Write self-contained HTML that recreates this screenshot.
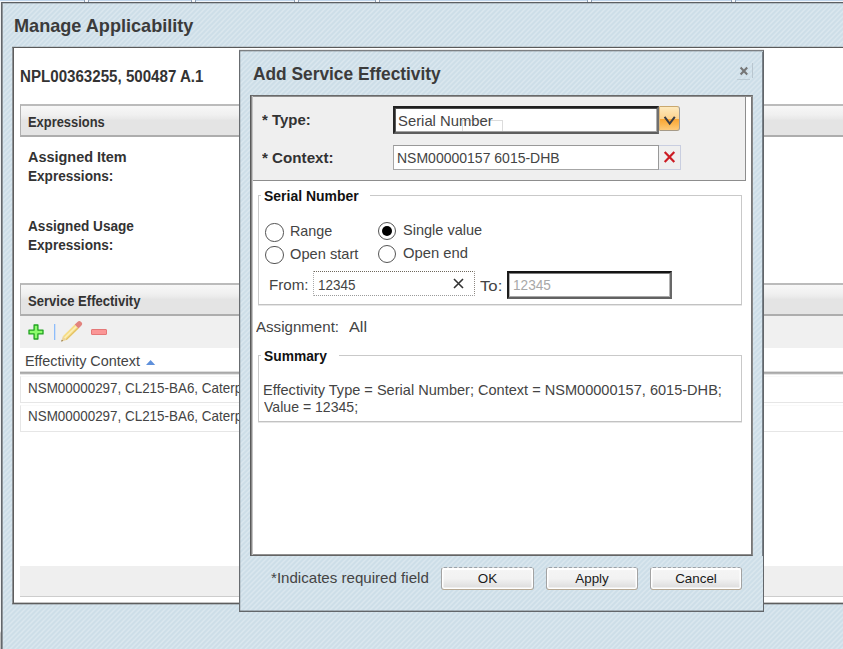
<!DOCTYPE html>
<html><head><meta charset="utf-8">
<style>
*{box-sizing:border-box;margin:0;padding:0}
html,body{width:843px;height:649px;overflow:hidden}
body{font-family:"Liberation Sans",sans-serif;color:#3a3a3a;position:relative;
 background:#cddee8 repeating-linear-gradient(135deg,rgba(255,255,255,0) 0,rgba(255,255,255,0) 1px,rgba(255,255,255,.26) 2px,rgba(255,255,255,.26) 2.5px,rgba(255,255,255,0) 3.54px);}
.abs{position:absolute}
.t{position:absolute;white-space:nowrap;transform-origin:0 50%;line-height:1}
.stripe{background:#cddee8 repeating-linear-gradient(135deg,rgba(255,255,255,0) 0,rgba(255,255,255,0) 1px,rgba(255,255,255,.26) 2px,rgba(255,255,255,.26) 2.5px,rgba(255,255,255,0) 3.54px)}
b,.b{font-weight:bold}
</style></head><body>
<!-- top app strip -->
<div class="abs" style="left:0;top:0;width:843px;height:1px;background:#c0d5eb"></div><div class="abs" style="left:0;top:1px;width:843px;height:1px;background:#f3f6fa"></div>
<div class="abs" style="left:84px;top:0;width:5px;height:2px;background:#f6f8fb;border-left:1px solid #8d9db3;border-right:1px solid #8d9db3"></div><div class="abs" style="left:191px;top:0;width:5px;height:2px;background:#f6f8fb;border-left:1px solid #8d9db3;border-right:1px solid #8d9db3"></div><div class="abs" style="left:294px;top:0;width:5px;height:2px;background:#f6f8fb;border-left:1px solid #8d9db3;border-right:1px solid #8d9db3"></div><div class="abs" style="left:375px;top:0;width:5px;height:2px;background:#f6f8fb;border-left:1px solid #8d9db3;border-right:1px solid #8d9db3"></div><div class="abs" style="left:587px;top:0;width:5px;height:2px;background:#f6f8fb;border-left:1px solid #8d9db3;border-right:1px solid #8d9db3"></div><div class="abs" style="left:731px;top:0;width:5px;height:2px;background:#f6f8fb;border-left:1px solid #8d9db3;border-right:1px solid #8d9db3"></div>
<!-- main window border -->
<div class="abs" style="left:1px;top:2px;width:842px;height:1px;background:#5c5f62"></div><div class="abs" style="left:3px;top:3px;width:840px;height:1px;background:rgba(90,95,100,.28)"></div>
<div class="abs" style="left:1px;top:2px;width:1px;height:647px;background:#63676b"></div><div class="abs" style="left:2px;top:3px;width:1px;height:646px;background:#8f959a"></div>
<div class="abs" style="left:0;top:2px;width:1px;height:647px;background:linear-gradient(#f0f1f2 0,#f0f1f2 629px,#bdbdbd 631px,#bdbdbd)"></div>

<div class="t" id="t_title" style="left:14.00px;top:17.00px;font-size:18.5px;color:#3b3b3b;font-weight:bold;transform:scaleX(0.9787)">Manage Applicability</div>

<!-- white main panel -->
<div class="abs" style="left:12px;top:47px;width:840px;height:557px;background:#fff;border-left:1px solid #8e9296;border-top:1px solid #5a5a5a;border-bottom:1px solid #5e5e5e;box-shadow:0 -1px 0 rgba(90,90,90,.18),0 1px 0 rgba(90,90,90,.3)"></div><div class="abs" style="left:13px;top:47px;width:1px;height:557px;background:#5e5e5e"></div><div class="abs" style="left:14px;top:602px;width:830px;height:1px;background:#c4c4c4"></div>

<div class="t" id="t_npl" style="left:20.00px;top:69.00px;font-size:16px;color:#333;font-weight:bold;transform:scaleX(0.9447)">NPL00363255, 500487 A.1</div>

<!-- Expressions header -->
<div class="abs hdr" style="left:20px;top:104px;width:830px;height:33px;border-left:1px solid #b0b0b0;border-top:2px solid #bbb;border-bottom:2px solid #adadad;background:linear-gradient(#f7f7f7,#f0f0f0 30%,#eaeaea 42%,#e4e4e4 50%,#e4e4e4)"></div>
<div class="t" id="t_expr" style="left:28.00px;top:115.00px;font-size:14px;color:#333;font-weight:bold;transform:scaleX(0.9210)">Expressions</div>

<div class="t" id="t_ai1" style="left:28.00px;top:150.00px;font-size:14.5px;color:#333;font-weight:bold;transform:scaleX(0.9960)">Assigned Item</div>
<div class="t" id="t_ai2" style="left:28.00px;top:169.00px;font-size:14.5px;color:#333;font-weight:bold;transform:scaleX(0.9370)">Expressions:</div>
<div class="t" id="t_au1" style="left:28.00px;top:219.00px;font-size:14.5px;color:#333;font-weight:bold;transform:scaleX(0.9388)">Assigned Usage</div>
<div class="t" id="t_au2" style="left:28.00px;top:238.00px;font-size:14.5px;color:#333;font-weight:bold;transform:scaleX(0.9370)">Expressions:</div>

<!-- Service Effectivity header -->
<div class="abs hdr" style="left:20px;top:283px;width:830px;height:33px;border-left:1px solid #b0b0b0;border-top:2px solid #bbb;border-bottom:2px solid #adadad;background:linear-gradient(#f7f7f7,#f0f0f0 30%,#eaeaea 42%,#e4e4e4 50%,#e4e4e4)"></div>
<div class="t" id="t_se" style="left:28.00px;top:294.00px;font-size:14px;color:#333;font-weight:bold;transform:scaleX(0.9324)">Service Effectivity</div>

<!-- toolbar -->
<div class="abs" style="left:20px;top:316px;width:830px;height:32px;background:#f0f0f0"></div>
<svg class="abs" style="left:28px;top:324px" width="16" height="16" viewBox="0 0 16 16"><path d="M6.1 1h3.8v5.1h5.1v3.8h-5.1v5.1h-3.800v-5.1H1v-3.800h5.1z" fill="#8dfc6c" stroke="#20a220" stroke-width="1.3" stroke-linejoin="round"/></svg>
<div class="abs" style="left:54px;top:324px;width:1px;height:16px;background:#8dbdfb;box-shadow:1px 0 0 rgba(141,189,251,.3)"></div>
<svg class="abs" style="left:59px;top:319px" width="25" height="25" viewBox="0 0 25 25"><path d="M2.20 22.60 L3.88 17.17 L7.66 21.03Z" fill="#ecd49a"/><path d="M3.88 17.17 L15.72 5.57 L19.50 9.43 L7.66 21.03Z" fill="#f6dd86"/><path d="M5.14 18.46 L16.98 6.86 L18.03 7.93 L6.19 19.53Z" fill="#fbeeb8"/><path d="M6.82 20.17 L18.66 8.57 L19.50 9.43 L7.66 21.03Z" fill="#e3c064"/><path d="M15.72 5.57 L18.44 2.91 Q20.44 0.95 22.11 3.09 Q24.22 4.81 22.22 6.77 L19.50 9.43Z" fill="#e2837e"/><path d="M2.20 22.60 L2.82 20.66 L4.15 22.02Z" fill="#7d6230"/></svg>
<div class="abs" style="left:91px;top:329px;width:15.5px;height:5.5px;background:#fb9696;border:1px solid #e57878;border-radius:1px"></div>

<!-- table header -->
<div class="t" id="t_ec" style="left:25.00px;top:354.00px;font-size:14px;color:#444;transform:scaleX(1.0288)">Effectivity Context</div>
<svg class="abs" style="left:145px;top:359px" width="11" height="7" viewBox="0 0 11 7"><path d="M1 6 L5.6 1 L10.2 6z" fill="#5f90db"/></svg>
<div class="abs" style="left:20px;top:371px;width:830px;height:4px;background:linear-gradient(#dedede 0,#dedede 25%,#a9a9a9 25%,#a9a9a9 50%,#b4b4b4 50%,#b4b4b4 75%,#e6e6e6 75%)"></div>
<!-- rows -->
<div class="abs" style="left:20px;top:375.5px;width:830px;height:27.5px;border:1px solid #e6e6e6;border-top-color:#f9f9f9"></div>
<div class="abs" style="left:20px;top:404.5px;width:830px;height:27.5px;border:1px solid #e6e6e6;border-top-color:#f9f9f9"></div>
<div class="t" id="t_r1" style="left:28.00px;top:381.00px;font-size:14.5px;color:#444;transform:scaleX(0.9255)">NSM00000297, CL215-BA6, Caterp</div>
<div class="t" id="t_r2" style="left:28.00px;top:409.00px;font-size:14.5px;color:#444;transform:scaleX(0.9255)">NSM00000297, CL215-BA6, Caterp</div>

<!-- bottom gray bar -->
<div class="abs" style="left:20px;top:566px;width:830px;height:31px;background:#efefef;border-bottom:1px solid #cdcdcd"></div>

<!-- ============ dialog ============ -->
<div class="abs stripe" style="left:239px;top:50px;width:525px;height:562px;border-left:1px solid #686c70;border-right:1px solid #62666a;border-bottom:1px solid #62666a;border-top:1px solid #7c7f82;box-shadow:inset 1px 0 0 rgba(100,105,110,.2),inset 0 -1px 0 rgba(95,100,105,.4),0 -1px 0 rgba(0,0,0,.08)"></div><div class="abs" style="left:240px;top:51px;width:523px;height:1px;background:rgba(95,100,105,.25)"></div><div class="abs" style="left:762px;top:52px;width:1px;height:504px;background:#79828a"></div>
<div class="t" id="t_dt" style="left:253.00px;top:65.00px;font-size:18.5px;color:#3b3b3b;font-weight:bold;transform:scaleX(0.9363)">Add Service Effectivity</div>
<svg class="abs" style="left:739px;top:66px" width="10" height="10" viewBox="0 0 10 10"><path d="M1.6 1.6 L8.2 8.4 M8.2 1.6 L1.6 8.4" stroke="#767676" stroke-width="2.1"/></svg>
<div class="abs" style="left:752px;top:63px;width:1px;height:15px;background:#b9c6cf"></div>
<div class="abs" style="left:737px;top:79px;width:13px;height:1px;background:#bccad3"></div>

<!-- content -->
<div class="abs" style="left:250px;top:95px;width:503px;height:461px;background:#fff;border-left:1px solid #5a5a5a;border-top:1px solid #6a6a6a;border-right:1px solid #888;border-bottom:1px solid #646464;box-shadow:inset 1px 0 0 #8a8a8a,inset 2px 0 0 #c4c4c4,inset 0 1px 0 #8e8e8e,inset -1px 0 0 #777,inset 0 -1px 0 #909090"></div>
<!-- gray form panel -->
<div class="abs" style="left:253px;top:97px;width:493px;height:84px;background:#efefef;border-right:1px solid #8d8d8d;border-bottom:1px solid #8d8d8d"></div>

<div class="t" id="t_type" style="left:262.00px;top:112.00px;font-size:15.5px;color:#333;font-weight:bold;transform:scaleX(0.9657)">* Type:</div>
<div class="abs" style="left:393px;top:106px;width:266px;height:28px;background:#fff;border:2px solid;border-color:#202020 #707070 #5e5e5e #262626;box-shadow:inset 0 1px 0 #4c4c4c,inset 1px 0 0 #5a5a5a,inset 0 -1px 0 #a2a2a2,inset -1px 0 0 #b0b0b0"></div>
<div class="abs" style="left:462px;top:120px;width:41px;height:11px;border-top:1px solid #dcdcdc;border-right:1px solid #dcdcdc;border-left:1px solid #dcdcdc"></div>
<div class="t" id="t_sn" style="left:398.00px;top:113.00px;font-size:15px;color:#444;transform:scaleX(0.9888)">Serial Number</div>

<!-- dropdown btn -->
<div class="abs" style="left:659px;top:106px;width:21px;height:24.5px;border:1px solid #c9a86e;border-right-color:#9c9c9c;border-bottom-color:#a59a88;border-left-color:#e0b878;border-radius:0 3px 3px 0;background:linear-gradient(#fde9bd,#fdd38e 50%,#f9a635 54%,#fbb650 75%,#fdcb7c)"></div>
<svg class="abs" style="left:663px;top:114px" width="14" height="12" viewBox="0 0 14 12"><path d="M1.6 2.8 L6.7 9.6 L11.800 2.8" fill="none" stroke="#3a3d46" stroke-width="2"/></svg>

<div class="t" id="t_ctx" style="left:262.00px;top:150.00px;font-size:15.5px;color:#333;font-weight:bold;transform:scaleX(0.9786)">* Context:</div>
<div class="abs" style="left:393px;top:144.5px;width:266px;height:25px;background:#fff;border:1px solid #a6a6a6;border-top-color:#999;border-right:1.5px solid #999"></div>
<div class="t" id="t_nsm" style="left:397.00px;top:150.00px;font-size:15.5px;color:#444;transform:scaleX(0.9034)">NSM00000157 6015-DHB</div>
<div class="abs" style="left:659px;top:144.5px;width:22px;height:25px;background:#efefef;border:1px solid #c9cee0;border-left:none"></div>
<svg class="abs" style="left:663px;top:150px" width="13" height="14" viewBox="0 0 13 14"><path d="M1.7 2 L11.300 12 M11.300 2 L1.7 12" stroke="#cc1c24" stroke-width="2.2"/></svg>

<!-- fieldset serial -->
<div class="abs" style="left:258px;top:195px;width:483.5px;height:110px;border:1px solid #c9c9c9;border-bottom-color:#c2c2c2;box-shadow:0 1px 0 #e6e6e6"></div>
<div class="abs" style="left:261px;top:190px;width:109px;height:12px;background:#fff"></div>
<div class="t" id="t_lsn" style="left:264.00px;top:189.00px;font-size:14px;color:#111;font-weight:bold;transform:scaleX(0.9974)">Serial Number</div>

<div class="abs radio" style="left:265.2px;top:223.2px;width:18.4px;height:18.4px;border:1.5px solid #555;border-radius:50%;background:#fff"></div>
<div class="abs radio" style="left:265.2px;top:245.700px;width:18.4px;height:18.4px;border:1.5px solid #555;border-radius:50%;background:#fff"></div>
<div class="abs radio" style="left:378px;top:221.800px;width:18.4px;height:18.4px;border:1.5px solid #555;border-radius:50%;background:#fff"></div>
<div class="abs" style="left:381.900px;top:225.700px;width:10.6px;height:10.6px;border-radius:50%;background:#000"></div>
<div class="abs radio" style="left:378px;top:245.100px;width:18.4px;height:18.4px;border:1.5px solid #555;border-radius:50%;background:#fff"></div>
<div class="t" id="t_range" style="left:290.00px;top:223.00px;font-size:15px;color:#444;transform:scaleX(0.9563)">Range</div>
<div class="t" id="t_os" style="left:290.00px;top:246.00px;font-size:15px;color:#444;transform:scaleX(0.9759)">Open start</div>
<div class="t" id="t_sv" style="left:403.00px;top:222.00px;font-size:15px;color:#444;transform:scaleX(0.9690)">Single value</div>
<div class="t" id="t_oe" style="left:403.00px;top:245.00px;font-size:15px;color:#444;transform:scaleX(0.9873)">Open end</div>

<div class="t" id="t_from" style="left:269.00px;top:277.00px;font-size:15px;color:#444;transform:scaleX(1.0102)">From:</div>
<div class="abs" style="left:312.5px;top:270.5px;width:162.5px;height:25.5px;background:#fff;border:1px dotted #8c8680;border-top-color:#6e675c;border-bottom-color:#9a9a9a;border-left-color:#aaa"></div>
<div class="t" id="t_v1" style="left:318.00px;top:277.00px;font-size:15.5px;color:#444;transform:scaleX(0.8683)">12345</div>
<svg class="abs" style="left:453px;top:278px" width="11" height="11" viewBox="0 0 11 11"><path d="M1 1 L10 10 M10 1 L1 10" stroke="#333" stroke-width="1.6"/></svg>
<div class="t" id="t_to" style="left:480.00px;top:278.00px;font-size:15px;color:#444;transform:scaleX(1.1146)">To:</div>
<div class="abs" style="left:507px;top:271px;width:165px;height:28px;background:#fff;border:2px solid;border-color:#141414 #686868 #626262 #1c1c1c;box-shadow:inset 0 1px 0 #7d7d7d,inset -1px 0 0 #b4b4b4,inset 0 -1px 0 #a8a8a8,inset 1px 0 0 #b0b0b0"></div>
<div class="t" id="t_v2" style="left:513.00px;top:277.00px;font-size:15.5px;color:#a8a8a8;transform:scaleX(0.8793)">12345</div>

<div class="t" id="t_asg" style="left:256.00px;top:319.00px;font-size:15px;color:#444;transform:scaleX(1.0060)">Assignment:</div>
<div class="t" id="t_all" style="left:349.00px;top:319.00px;font-size:15px;color:#444;transform:scaleX(1.0856)">All</div>

<!-- fieldset summary -->
<div class="abs" style="left:258px;top:355px;width:483.5px;height:67px;border:1px solid #c9c9c9;border-bottom-color:#c2c2c2;box-shadow:0 1px 0 #e6e6e6"></div>
<div class="abs" style="left:261px;top:350px;width:78px;height:12px;background:#fff"></div>
<div class="t" id="t_lsum" style="left:264.00px;top:349.00px;font-size:14px;color:#111;font-weight:bold;transform:scaleX(0.9858)">Summary</div>
<div class="t" id="t_s1" style="left:263.00px;top:382.00px;font-size:15px;color:#444;transform:scaleX(0.9701)">Effectivity Type = Serial Number; Context = NSM00000157, 6015-DHB;</div>
<div class="t" id="t_s2" style="left:264.00px;top:399.00px;font-size:15px;color:#444;transform:scaleX(0.9388)">Value = 12345;</div>

<!-- footer -->
<div class="t" id="t_req" style="left:271.00px;top:570.00px;font-size:15px;color:#444;transform:scaleX(1.0066)">*Indicates required field</div>
<div class="abs btn" style="left:441px;top:567px;width:93px;height:23px"><span>OK</span></div>
<div class="abs btn" style="left:546px;top:567px;width:92px;height:23px"><span>Apply</span></div>
<div class="abs btn" style="left:650px;top:567px;width:92px;height:23px"><span>Cancel</span></div>
<style>
.btn{border:1px solid #a3a3a3;border-top:1px dashed #9aa2a9;border-bottom:1.5px solid #b7a994;border-radius:3px;background:linear-gradient(#f5f5f5,#f2f2f2 50%,#e4e4e4 80%,#dadada);box-shadow:inset 0 0 0 1.5px #fff,inset 0 2px 0 0 #fff;text-align:center;font-size:13.4px;color:#1a1a1a;line-height:21.5px}
</style>
</body></html>
